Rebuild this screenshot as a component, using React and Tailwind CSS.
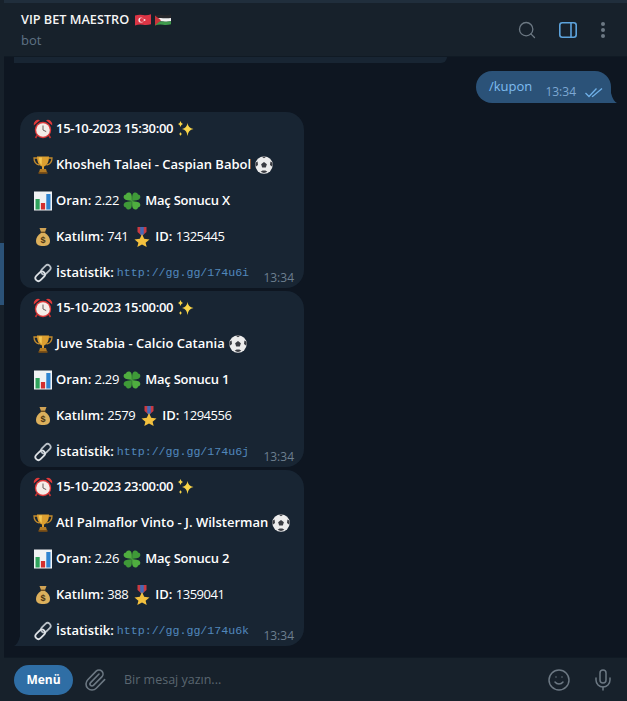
import React from 'react'
import { Search, Paperclip, Smile, Mic } from 'lucide-react'

const Clock = () => (
  <svg width="20" height="20" viewBox="0 0 20 20">
    <path d="M0.8 6.5 A4.6 4.6 0 0 1 7 1.2 Z" fill="#e0393a" />
    <path d="M19.2 6.5 A4.6 4.6 0 0 0 13 1.2 Z" fill="#e0393a" />
    <path d="M4 16.5 L2.5 19 M16 16.5 L17.5 19" stroke="#c23232" strokeWidth="1.6" />
    <circle cx="10" cy="11" r="8.2" fill="#e0393a" />
    <circle cx="10" cy="11" r="6.8" fill="#f4ede8" />
    <path d="M10 6.5 V11 L13.2 12.6" stroke="#6b5f5f" strokeWidth="1" fill="none" />
  </svg>
)

const Sparkles = () => (
  <svg width="18" height="18" viewBox="0 0 18 18">
    <path d="M10.5 3 Q11 8 16.5 9 Q11 10 10.5 16 Q10 10 5 9 Q10 8 10.5 3Z" fill="#f8d448" />
    <path d="M3.5 1 Q4 3.5 6 4 Q4 4.5 3.5 7 Q3 4.5 1 4 Q3 3.5 3.5 1Z" fill="#f8d448" />
    <path d="M3.5 12 Q3.8 13.7 5 14 Q3.8 14.3 3.5 16 Q3.2 14.3 2 14 Q3.2 13.7 3.5 12Z" fill="#f8d448" />
  </svg>
)

const Trophy = () => (
  <svg width="20" height="20" viewBox="0 0 20 20">
    <path d="M4.5 3 H1 C1 7.5 3.5 9.5 6.5 10 M15.5 3 H19 C19 7.5 16.5 9.5 13.5 10" stroke="#c28a2c" strokeWidth="1.3" fill="none" />
    <path d="M4 1.5 H16 C16 7 14 10.5 11 11.5 V14 H9 V11.5 C6 10.5 4 7 4 1.5Z" fill="#dc9f30" />
    <path d="M6 2.5 H9 C8.8 6 8.6 8 8.8 10 C7 9 6 6 6 2.5Z" fill="#f4c854" />
    <path d="M7 14 H13 L14 17.5 H6Z" fill="#b27a24" />
    <rect x="5.5" y="17" width="9" height="1.8" fill="#7b4f16" />
  </svg>
)

const Ball = () => (
  <svg width="18" height="18" viewBox="0 0 18 18">
    <circle cx="9" cy="9" r="8.7" fill="#ececec" />
    <path d="M9 6 L11.9 8.2 L10.8 11.5 H7.2 L6.1 8.2Z" fill="#3a3c42" />
    <path d="M6.8 0.8 L9 2.3 L11.2 0.8 Q9 0 6.8 0.8Z M0.8 6.5 L2.6 5.4 L3 9 L1 10.5 Q0 8.5 0.8 6.5Z M17.2 6.5 L15.4 5.4 L15 9 L17 10.5 Q18 8.5 17.2 6.5Z M5.6 15.8 L7.6 14.6 H10.4 L12.4 15.8 Q9 18 5.6 15.8Z" fill="#3a3c42" />
  </svg>
)

const Chart = () => (
  <svg width="20" height="20" viewBox="0 0 20 20">
    <rect x="1" y="0.5" width="18" height="19" fill="#f0f2f4" />
    <rect x="2.5" y="8" width="4.2" height="10.5" fill="#2fa35c" />
    <rect x="7.9" y="12" width="4.2" height="6.5" fill="#d42f2f" />
    <rect x="13.3" y="3" width="4.2" height="15.5" fill="#2f84d0" />
  </svg>
)

const Clover = () => (
  <svg width="20" height="20" viewBox="0 0 20 20">
    <path d="M10 10 C8.5 9.5 6 9.8 3.6 8.8 C0.5 7.4 1.5 3.6 4 3.6 C4.4 1 8.4 0.6 9.4 3.4 C10.2 5.6 9.6 8 10 10Z" fill="#4fae3f" />
    <path d="M10 10 C11.5 9.5 14 9.8 16.4 8.8 C19.5 7.4 18.5 3.6 16 3.6 C15.6 1 11.6 0.6 10.6 3.4 C9.8 5.6 10.4 8 10 10Z" fill="#3f9a38" />
    <path d="M10 10 C8.5 10.5 6 10.2 3.6 11.2 C0.5 12.6 1.5 16.4 4 16.4 C4.4 19 8.4 19.4 9.4 16.6 C10.2 14.4 9.6 12 10 10Z" fill="#3f9a38" />
    <path d="M10 10 C11.5 10.5 14 10.2 16.4 11.2 C19.5 12.6 18.5 16.4 16 16.4 C15.6 19 11.6 19.4 10.6 16.6 C9.8 14.4 10.4 12 10 10Z" fill="#4fae3f" />
  </svg>
)

const MoneyBag = () => (
  <svg width="20" height="20" viewBox="0 0 20 20">
    <path d="M6.5 1 L13.5 1 L12 5 H8Z" fill="#d0a355" />
    <rect x="7.6" y="4.6" width="4.8" height="1.4" fill="#6f4e20" />
    <path d="M8 6 H12 C15.5 8 17 11 17 14 C17 18 14 19 10 19 C6 19 3 18 3 14 C3 11 4.5 8 8 6Z" fill="#dcb05c" />
    <text x="10" y="16" textAnchor="middle" fontSize="9" fontWeight="700" fill="#4d3514" fontFamily="Liberation Sans, sans-serif">$</text>
  </svg>
)

const Medal = () => (
  <svg width="20" height="20" viewBox="0 0 20 20">
    <path d="M5.5 0 H14.5 V5 L10 9 L5.5 5Z" fill="#c93a42" />
    <path d="M8.2 0 H11.8 V7 L10 9 L8.2 7Z" fill="#4569b5" />
    <path d="M10 7 L12.2 11.8 L17.5 12.4 L13.6 15.8 L14.7 20 L10 17.6 L5.3 20 L6.4 15.8 L2.5 12.4 L7.8 11.8Z" fill="#f3c13e" />
  </svg>
)

const LinkEmoji = () => (
  <svg width="20" height="20" viewBox="0 0 20 20" fill="none">
    <rect x="9.8" y="1.2" width="6" height="11" rx="3" transform="rotate(45 12.8 6.7)" stroke="#b9c0c7" strokeWidth="1.8" />
    <rect x="4.2" y="7.8" width="6" height="11" rx="3" transform="rotate(45 7.2 13.3)" stroke="#dde1e5" strokeWidth="1.8" />
  </svg>
)

const FlagTurkey = () => (
  <svg width="16" height="12" viewBox="0 0 16 12">
    <path d="M0 1.5 Q4 0.2 8 1 T16 0.3 V10.3 Q12 11.4 8 10.8 T0 11.5Z" fill="#dc3545" />
    <circle cx="6" cy="6" r="2.6" fill="#f7e6e8" />
    <circle cx="6.8" cy="6" r="2" fill="#dc3545" />
    <circle cx="9.6" cy="6" r="0.9" fill="#f7e6e8" />
  </svg>
)

const FlagPalestine = () => (
  <svg width="16" height="12" viewBox="0 0 16 12">
    <path d="M0 1.5 Q4 0.2 8 1 T16 0.3 V4 Q12 4.6 8 4.2 T0 4.8Z" fill="#26272b" />
    <path d="M0 4.8 Q4 3.8 8 4.2 T16 4 V7.3 Q12 8 8 7.5 T0 8.2Z" fill="#f1f1f1" />
    <path d="M0 8.2 Q4 7.1 8 7.5 T16 7.3 V10.3 Q12 11.4 8 10.8 T0 11.5Z" fill="#3f9a4c" />
    <path d="M0 1.5 L6 6.2 L0 11.5Z" fill="#c9343a" />
  </svg>
)

const DoubleCheck = () => (
  <svg width="18" height="11" viewBox="0 0 18 11" fill="none" stroke="#6fb0e8" strokeWidth="1.3">
    <path d="M0.5 6 L4 9.5 L11.5 1.5" />
    <path d="M7 9 L7.6 9.5 L17 1.5" />
  </svg>
)

const SidePanelIcon = () => (
  <svg width="18" height="16" viewBox="0 0 18 16" fill="none" stroke="#5da3dc" strokeWidth="1.6">
    <rect x="0.8" y="0.8" width="16.4" height="14.4" rx="2.5" />
    <path d="M12 1 V15" />
  </svg>
)

const Dots = () => (
  <svg width="4" height="16" viewBox="0 0 4 16" fill="#6c7883">
    <circle cx="2" cy="2" r="2" />
    <circle cx="2" cy="8" r="2" />
    <circle cx="2" cy="14" r="2" />
  </svg>
)

const messages = [
  { date: '15-10-2023 15:30:00', match: 'Khosheh Talaei - Caspian Babol', odds: '2.22', result: 'X', joined: '741', id: '1325445', link: 'http://gg.gg/174u6i' },
  { date: '15-10-2023 15:00:00', match: 'Juve Stabia - Calcio Catania', odds: '2.29', result: '1', joined: '2579', id: '1294556', link: 'http://gg.gg/174u6j' },
  { date: '15-10-2023 23:00:00', match: 'Atl Palmaflor Vinto - J. Wilsterman', odds: '2.26', result: '2', joined: '388', id: '1359041', link: 'http://gg.gg/174u6k', tail: true },
]

function Row({ children }) {
  return <div className="flex h-5 items-center whitespace-nowrap">{children}</div>
}

function BotMessage({ message }) {
  return (
    <div className="flex items-end">
      {message.tail ? (
        <svg width="6" height="10" viewBox="0 0 6 10" className="shrink-0"><path d="M6 0 V10 H0 Q4 8 6 0Z" fill="#182533" /></svg>
      ) : (
        <div className="w-[6px] shrink-0" />
      )}
      <div className={`flex h-[176px] w-[284px] flex-col gap-4 rounded-t-[18px] rounded-br-[18px] bg-[#182533] pb-[5px] pl-[13px] pr-[10px] pt-[7px] ${message.tail ? 'rounded-bl-none' : 'rounded-bl-[12px]'}`}>
        <Row>
          <Clock /><span className="ml-[3px] font-[560] tracking-[-0.3px]">{message.date}</span><span className="ml-[4px]"><Sparkles /></span>
        </Row>
        <Row>
          <Trophy /><span className="ml-[3px] font-[560]">{message.match}</span><span className="ml-[4px]"><Ball /></span>
        </Row>
        <Row>
          <Chart /><span className="ml-[3px]"><b className="font-[560]">Oran:</b> <span className="tracking-[-0.3px]">{message.odds}</span></span><span className="mx-[3px]"><Clover /></span><span className="font-[560] tracking-[-0.2px]">Maç Sonucu {message.result}</span>
        </Row>
        <Row>
          <MoneyBag /><span className="ml-[3px]"><b className="font-[560]">Katılım:</b> <span className="tracking-[-0.4px]">{message.joined}</span></span><span className="ml-[4px] mr-[3px]"><Medal /></span><span><b className="font-[560]">ID:</b> <span className="tracking-[-0.5px]">{message.id}</span></span>
        </Row>
        <Row>
          <LinkEmoji /><span className="ml-[3px] font-[560]">İstatistik:</span>
          <span className="ml-[3px] font-['Liberation_Mono',monospace] text-[11.6px] text-[#6ab2f2] opacity-70">{message.link}</span>
          <span className="ml-auto self-end text-[12px] leading-[10px] text-[#6d7f8f]">13:34</span>
        </Row>
      </div>
    </div>
  )
}

export default function App() {
  return (
    <div className="flex h-[701px] w-[627px] overflow-hidden bg-[#0e1621] font-['Open_Sans',sans-serif] text-[13px] text-white">
      <div className="flex w-[4px] shrink-0 flex-col bg-[#17212b]">
        <div className="h-[243px]" />
        <div className="h-[62px] bg-[#2b5278]" />
      </div>

      <div className="flex min-w-0 flex-1 flex-col">
        <div className="h-[3px] shrink-0 bg-[#202e3c]" />
        <header className="flex h-[54px] shrink-0 items-center border-b border-[#101a24] bg-[#17212b] pl-[17px] pr-[22px]">
          <div className="flex-1">
            <div className="flex h-[20px] items-center text-[12.7px] font-semibold text-[#f5f5f5]">
              VIP BET MAESTRO
              <span className="ml-[6px]"><FlagTurkey /></span>
              <span className="ml-[4px]"><FlagPalestine /></span>
            </div>
            <div className="text-[13px] leading-[20px] text-[#5f7285]">bot</div>
          </div>
          <Search size={20} strokeWidth={1.6} className="text-[#6c7883]" />
          <span className="ml-[22px]"><SidePanelIcon /></span>
          <span className="ml-[24px]"><Dots /></span>
        </header>

        <main className="flex min-h-0 flex-1 flex-col">
          <div className="ml-[10px] h-[6px] w-[433px] shrink-0 rounded-br-[12px] bg-[#182533]" />
          <div className="mt-[8px] flex shrink-0 justify-end pr-[10px]">
            <div className="flex h-[32px] w-[135px] items-center rounded-l-[16px] rounded-tr-[16px] bg-[#2b5278] pl-[13px] pr-[8px]">
              <span className="text-[#7fbdf0]">/kupon</span>
              <span className="ml-auto self-end pb-[2px] text-[12px] text-[#7da8d3]">13:34</span>
              <span className="ml-[9px] self-end pb-[5px]"><DoubleCheck /></span>
            </div>
            <svg width="6" height="10" viewBox="0 0 6 10" className="self-end"><path d="M0 0 V10 H6 Q2 8 0 0Z" fill="#2b5278" /></svg>
          </div>
          <div className="mt-[9px] flex flex-col gap-[3px] pl-[10px]">
            {messages.map((message) => <BotMessage key={message.id} message={message} />)}
          </div>
        </main>

        <footer className="flex h-[44px] shrink-0 items-center border-t border-[#101a24] bg-[#17212b] pl-[10px] pr-[12px]">
          <button className="h-[30px] w-[59px] rounded-full bg-[#2f6ea5] text-[12px] font-bold text-white">Menü</button>
          <Paperclip size={24} strokeWidth={1.6} className="ml-[10px] text-[#6c7883]" />
          <span className="ml-[17px] flex-1 pt-[2px] text-[12.5px] text-[#5a6670]">Bir mesaj yazın...</span>
          <Smile size={24} strokeWidth={1.5} className="text-[#6c7883]" />
          <Mic size={24} strokeWidth={1.5} className="ml-[20px] text-[#6c7883]" />
        </footer>
      </div>
    </div>
  )
}
